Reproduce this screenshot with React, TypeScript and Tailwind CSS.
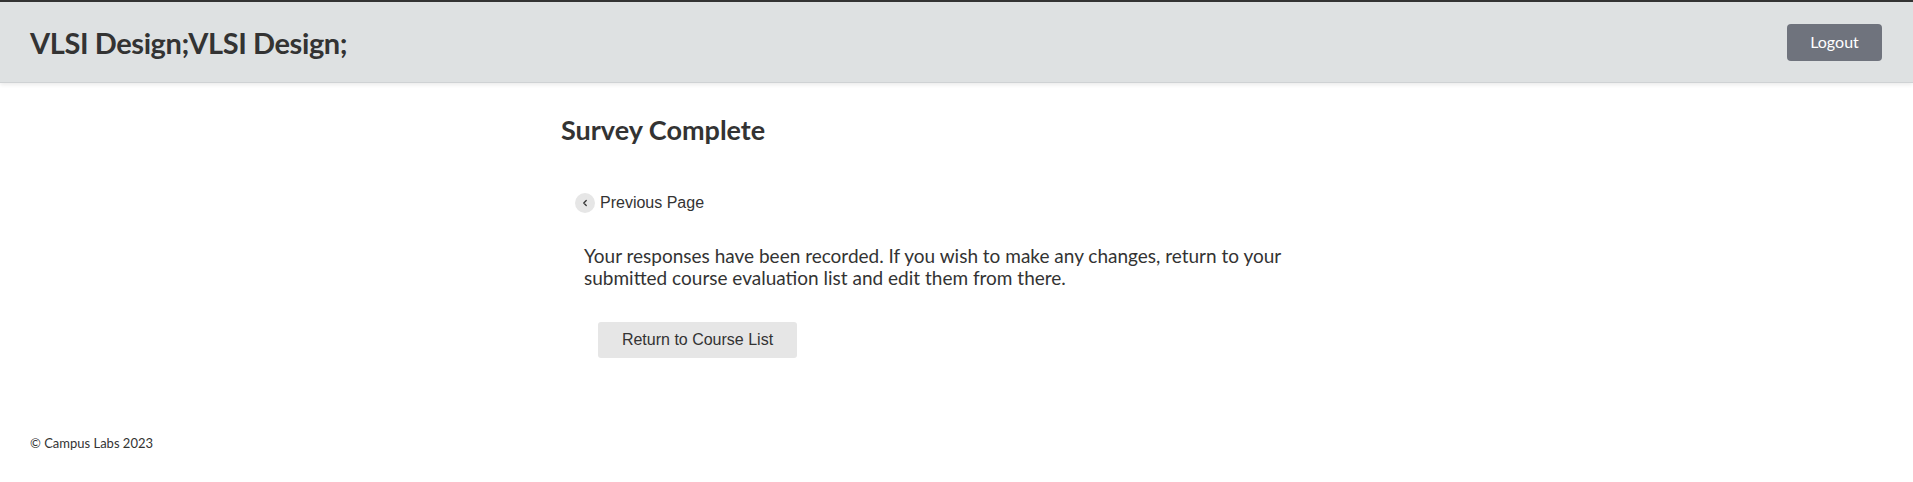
import { ChevronLeft } from "lucide-react";

const sans = "font-['Source_Sans_Pro','Lato',sans-serif]";

const App = () => {
  return (
    <div className={`min-h-screen bg-white text-[#333] ${sans}`}>
      <header className="border-t-2 border-[#333] bg-[#dee1e2] border-b border-b-[#cfd2d4] shadow-[0_2px_4px_rgba(0,0,0,0.08)]">
        <div className="h-[80px] flex items-center justify-between pl-[30px] pr-[31px]">
          <h1 className="text-[29px] font-bold leading-none tracking-[-0.4px]">
            VLSI Design;VLSI Design;
          </h1>
          <button className="h-[37px] w-[95px] rounded-[4px] bg-[#6f737d] text-white text-[16px]">
            Logout
          </button>
        </div>
      </header>

      <main className="w-[791px] mx-auto">
        <h2 className="mt-[31px] text-[27px] font-bold leading-[32px]">
          Survey Complete
        </h2>

        <a
          href="#"
          className="mt-[47px] ml-[14px] flex items-center gap-[5px] h-[20px] font-['Liberation_Sans',Arial,sans-serif] text-[16px] text-[#333]"
        >
          <span className="w-[20px] h-[20px] rounded-full bg-[#e6e6e6] flex items-center justify-center">
            <ChevronLeft size={10} strokeWidth={3} className="text-[#333]" />
          </span>
          Previous Page
        </a>

        <p className="mt-[32px] ml-[23px] text-[19px] leading-[22px] max-w-[740px]">
          Your responses have been recorded. If you wish to make any changes,
          return to your submitted course evaluation list and edit them from
          there.
        </p>

        <button className="mt-[33px] ml-[37px] h-[36px] w-[199px] rounded-[3px] bg-[#e6e6e6] font-['Liberation_Sans',Arial,sans-serif] text-[16px] text-[#333]">
          Return to Course List
        </button>
      </main>

      <footer className="mt-[77px] pl-[30px] text-[13px] leading-[16px]">
        © Campus Labs 2023
      </footer>
    </div>
  );
};

export default App;
